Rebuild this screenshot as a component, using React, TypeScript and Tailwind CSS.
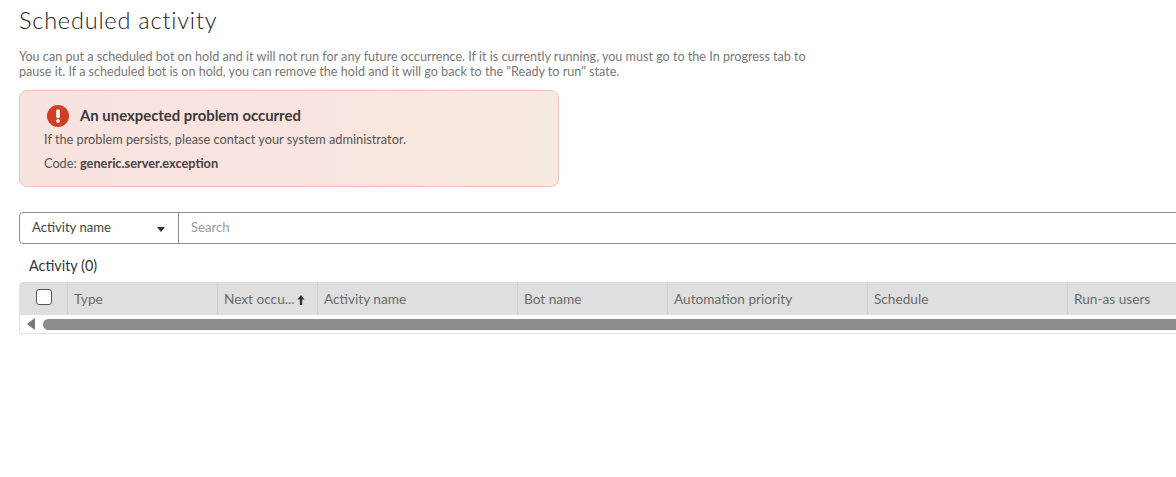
const columns = [
  { label: 'Next occu...', width: 'w-[100px]', sorted: true },
  { label: 'Activity name', width: 'w-[200px]' },
  { label: 'Bot name', width: 'w-[150px]' },
  { label: 'Automation priority', width: 'w-[200px]' },
  { label: 'Schedule', width: 'w-[200px]' },
  { label: 'Run-as users', width: 'w-[200px]' },
]

function ErrorIcon() {
  return (
    <svg width="22" height="22" viewBox="0 0 22 22" className="shrink-0">
      <circle cx="11" cy="11" r="11" fill="#d13f22" />
      <rect x="9.2" y="4.5" width="3.6" height="8.5" rx="1.2" fill="#fff" />
      <circle cx="11" cy="16" r="1.9" fill="#fff" />
    </svg>
  )
}

export default function App() {
  return (
    <div className="h-[477px] w-[1176px] overflow-hidden bg-white pl-[19px] font-['Lato',sans-serif] text-[#4a4a4a]">
      <h1 className="pt-[5px] text-[23.5px] font-light leading-[30px] tracking-[0.8px] text-[#222]">Scheduled activity</h1>

      <p className="mt-[14px] w-[800px] whitespace-nowrap text-[12.6px] leading-[15px] text-[#777]">
        You can put a scheduled bot on hold and it will not run for any future occurrence. If it is currently running, you must go to the In progress tab to
        <br />
        pause it. If a scheduled bot is on hold, you can remove the hold and it will go back to the "Ready to run" state.
      </p>

      <div className="mt-[11px] h-[97px] w-[540px] rounded-lg border border-[#f0c2b6] bg-gradient-to-r from-[#f9e3df] via-[#f9e4df] to-[#f6eadf] pl-[24px] pt-[13px]">
        <div className="flex items-center gap-[11px] pl-[3px]">
          <ErrorIcon />
          <span className="pb-[1px] text-[14.9px] font-bold leading-[22px] text-[#3a3a3a]">An unexpected problem occurred</span>
        </div>
        <div className="mt-[2px] text-[12.75px] leading-[20px] text-[#555]">If the problem persists, please contact your system administrator.</div>
        <div className="mt-[4px] text-[12.75px] leading-[20px] text-[#555]">
          Code: <span className="font-bold text-[#444]">generic.server.exception</span>
        </div>
      </div>

      <div className="mt-[25px] flex h-[32px] w-[1200px] rounded-l border border-[#8c8c8c] text-[13.1px]">
        <div className="flex w-[159px] shrink-0 items-center justify-between border-r border-[#8c8c8c] pl-[12px] pr-[11px] text-[#444]">
          <span>Activity name</span>
          <span className="mt-[2px] mr-[2px] h-0 w-0 border-x-[4.5px] border-t-[5px] border-x-transparent border-t-[#333]" />
        </div>
        <div className="flex items-center pl-[12px] text-[#9b9b9b]">Search</div>
      </div>

      <div className="mt-[13px] pl-[10px] text-[14.4px] leading-[18px] text-[#333]">Activity (0)</div>

      <div className="mt-[7px] w-[1200px] rounded-t border-b border-l border-[#e3e3e3]">
        <div className="flex h-[33px] rounded-t bg-[#dfdfdf] text-[13.65px] text-[#6a6a6a]">
          <div className="flex w-[48px] shrink-0 justify-center border-r border-[#cfcfcf] pt-[7px]">
            <span className="h-[16px] w-[16px] rounded-[3px] border border-[#555] bg-white" />
          </div>
          <div className="flex w-[150px] shrink-0 items-center border-r border-[#cfcfcf] pl-[6px] pt-[2px]">Type</div>
          {columns.map((col) => (
            <div key={col.label} className={`flex ${col.width} shrink-0 items-center border-r border-[#cfcfcf] pl-[6px] pt-[2px]`}>
              {col.label}
              {col.sorted && (
                <svg width="8" height="10" viewBox="0 0 8 10" className="ml-[3px]">
                  <path d="M4 0 L7.5 4.5 H5.2 V10 H2.8 V4.5 H0.5 Z" fill="#333" />
                </svg>
              )}
            </div>
          ))}
        </div>
        <div className="flex h-[18px] items-center bg-white">
          <svg width="9" height="12" viewBox="0 0 9 12" className="ml-[7px]">
            <path d="M8 0 V12 L0 6 Z" fill="#777" />
          </svg>
          <div className="ml-[7px] h-[11px] flex-1 rounded-l-full bg-[#8c8c8c]" />
        </div>
      </div>
    </div>
  )
}
